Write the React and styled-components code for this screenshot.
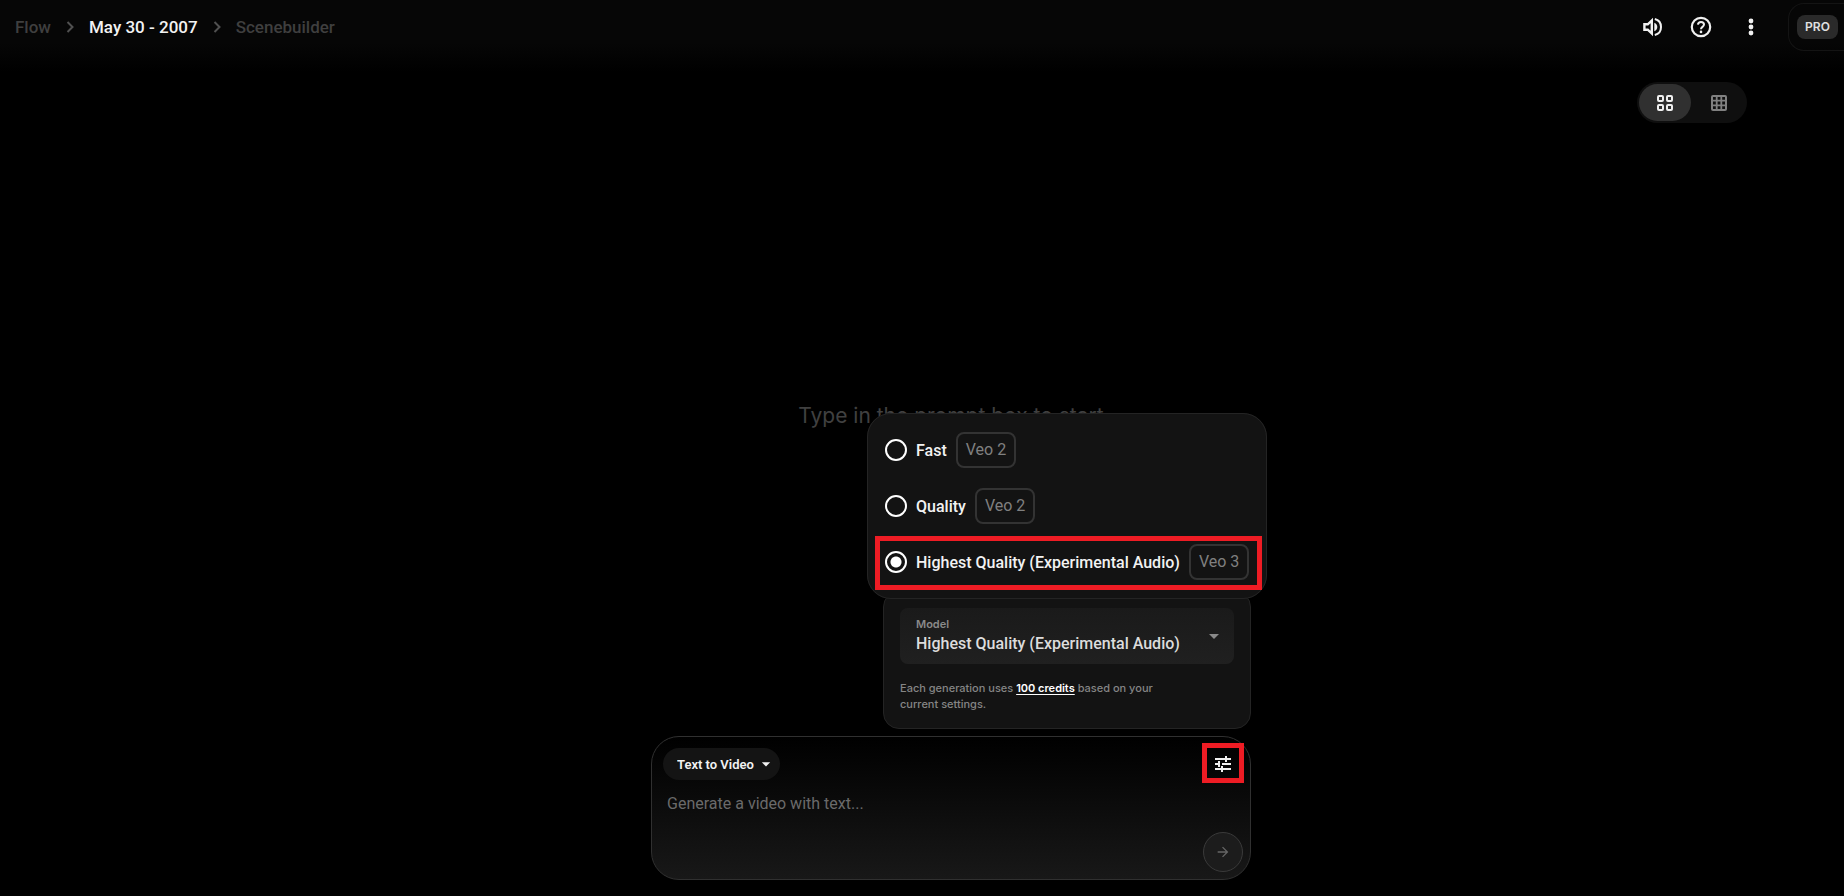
import React from "react";
import styled, { createGlobalStyle, css } from "styled-components";
import { MdArrowForward, MdArrowDropDown } from "react-icons/md";

const GlobalStyle = createGlobalStyle`
  *, *::before, *::after { box-sizing: border-box; }
  body {
    margin: 0;
    background: #000;
    color: #f0f0f0;
    font-family: Roboto, "Liberation Sans", sans-serif;
    font-size: 16px;
  }
  button, select, input, textarea { font: inherit; color: inherit; }
`;

const displayFont = css`
  font-family: Inter, Roboto, sans-serif;
`;

const Page = styled.div`
  min-height: 100vh;
  display: flex;
  flex-direction: column;
  overflow-x: hidden;
`;

const Header = styled.header`
  height: 72px;
  padding: 3px 0 0 15px;
  display: flex;
  justify-content: space-between;
  align-items: flex-start;
  background: linear-gradient(#060606 60%, #000);
`;

const Breadcrumbs = styled.nav`
  height: 47px;
  display: flex;
  align-items: center;
  gap: 15px;
`;

const Crumb = styled.a`
  color: ${(p) => (p.$current ? "#f2f2f2" : "#3f3f3f")};
  font-size: 17px;
  font-weight: 500;
  line-height: 24px;
  text-decoration: none;
`;

const Chevron = styled.svg`
  width: 8px;
  height: 12px;
  fill: none;
  stroke: #505050;
  stroke-width: 2;
`;

const HeaderActions = styled.div`
  display: flex;
  align-items: center;
`;

const IconButton = styled.button`
  width: 48px;
  height: 48px;
  padding: 0;
  border: 0;
  background: none;
  display: grid;
  place-items: center;
  color: #f0f0f0;
`;

const MoreButton = styled(IconButton)`
  margin-left: 2px;
`;

const Glyph = styled.svg`
  width: ${(p) => p.$size}px;
  height: ${(p) => p.$size}px;
  fill: none;
  stroke: currentColor;
  stroke-width: 2;
`;

const AccountButton = styled.button`
  height: 48px;
  margin-left: 13px;
  padding: 0 6px 0 8px;
  border: 1px solid #141414;
  border-right: 0;
  border-radius: 16px 0 0 16px;
  background: none;
`;

const PlanBadge = styled.span`
  ${displayFont}
  display: block;
  width: 41px;
  border-radius: 8px;
  background: #2a2a2a;
  color: #e0e0e0;
  font-size: 12px;
  font-weight: 600;
  line-height: 24px;
  text-align: center;
`;

const Main = styled.main`
  flex: 1;
  display: flex;
  flex-direction: column;
`;

const ViewToolbar = styled.div`
  display: flex;
  justify-content: flex-end;
  padding: 10px 97px 0 0;
`;

const ViewToggle = styled.div`
  display: flex;
  gap: 2px;
  padding: 2px;
  border-radius: 21px;
  background: #0f0f0f;
`;

const ViewButton = styled.button`
  width: 52px;
  height: 37px;
  padding: 0;
  border: 0;
  border-radius: 19px;
  display: grid;
  place-items: center;
  background: ${(p) => (p.$active ? "#303030" : "none")};
  color: ${(p) => (p.$active ? "#f0f0f0" : "#808080")};
`;

const Stage = styled.section`
  flex: 1;
  padding: 0 0 27px 58px;
  display: grid;
  place-items: center;
`;

const Hint = styled.p`
  ${displayFont}
  margin: 0;
  color: #404040;
  font-size: 21px;
  line-height: 28px;
`;

const Dock = styled.footer`
  padding: 0 0 16px 58px;
  display: flex;
  justify-content: center;
`;

const Composer = styled.form`
  position: relative;
  width: 600px;
  max-width: 100%;
  padding: 11px 7px 7px 11px;
  border: 1px solid #303030;
  border-radius: 28px;
  background: linear-gradient(#000, #181818);
`;

const ComposerRow = styled.div`
  display: flex;
  justify-content: space-between;
  align-items: center;
  height: 32px;
`;

const ModeField = styled.label`
  position: relative;
  display: flex;
  align-items: center;
`;

const ModeSelect = styled.select`
  appearance: none;
  width: 117px;
  height: 32px;
  padding: 0 24px 0 14px;
  border: 0;
  border-radius: 16px;
  background: #141414;
  color: #f2f2f2;
  font-size: 13px;
  font-weight: 600;
`;

const Arrow = styled(MdArrowDropDown)`
  position: absolute;
  top: 50%;
  right: ${(p) => p.$right}px;
  width: ${(p) => p.$size}px;
  height: ${(p) => p.$size}px;
  transform: translateY(-50%);
  color: ${(p) => p.color};
  pointer-events: none;
`;

const Highlight = styled.span`
  position: absolute;
  inset: ${(p) => p.$inset};
  border: 5px solid #ee1c24;
  pointer-events: none;
`;

const TuneButton = styled(IconButton)`
  position: relative;
  width: 40px;
  height: 40px;
`;

const PromptRow = styled.div`
  display: flex;
  align-items: flex-end;
  gap: 12px;
`;

const PromptInput = styled.textarea`
  flex: 1;
  height: 92px;
  padding: 12px 4px;
  border: 0;
  outline: 0;
  resize: none;
  background: none;
  line-height: 24px;
  &::placeholder { color: #6a6a6a; opacity: 1; }
`;

const SendButton = styled.button`
  width: 40px;
  height: 40px;
  padding: 0;
  border: 1px solid #3a3a3a;
  border-radius: 50%;
  background: #1c1c1c;
  color: #666;
  display: grid;
  place-items: center;
`;

const surface = css`
  border: 1px solid #242424;
  background: #131313;
`;

const Settings = styled.section`
  ${surface}
  position: absolute;
  right: -1px;
  bottom: calc(100% + 8px);
  width: 368px;
  padding: 16px;
  border-radius: 16px;
`;

const ModelField = styled.label`
  position: relative;
  display: block;
  height: 56px;
  padding: 8px 0 0;
  border-radius: 8px;
  background: linear-gradient(#1a1a1a, #202020);
`;

const ModelLabel = styled.span`
  ${displayFont}
  display: block;
  padding: 0 16px;
  color: #8a8a8a;
  font-size: 11px;
  font-weight: 600;
  line-height: 16px;
`;

const ModelSelect = styled.select`
  appearance: none;
  display: block;
  width: 100%;
  height: 22px;
  padding: 0 32px 0 16px;
  border: 0;
  background: none;
  color: #dcdcdc;
  font-weight: 500;
`;

const CreditNote = styled.p`
  ${displayFont}
  max-width: 268px;
  margin: 16px 0 0;
  color: #858585;
  font-size: 11px;
  font-weight: 500;
  line-height: 16px;
`;

const CreditLink = styled.a`
  color: #fff;
  font-weight: 600;
  text-underline-offset: 2px;
`;

const ModelMenu = styled.fieldset`
  ${surface}
  position: absolute;
  right: -17px;
  bottom: 129px;
  width: 400px;
  min-width: 0;
  margin: 0;
  padding: 8px;
  border-radius: 24px;
`;

const Option = styled.label`
  position: relative;
  height: 56px;
  padding: 0 9px;
  display: flex;
  align-items: center;
  gap: 9px;
`;

const Radio = styled.input`
  appearance: none;
  flex: none;
  width: 22px;
  height: 22px;
  margin: 0;
  border: 2px solid #fff;
  border-radius: 50%;
  &:checked { background: radial-gradient(circle, #fff 5px, transparent 6px); }
`;

const VersionBadge = styled.span`
  padding: 0 8px;
  border: 2px solid #333;
  border-radius: 8px;
  color: #808080;
  line-height: 32px;
  white-space: nowrap;
`;

const OptionName = styled.span`
  color: #f2f2f2;
  font-weight: 500;
  white-space: nowrap;
`;

const MODELS = [
  { id: "fast", name: "Fast", version: "Veo 2" },
  { id: "quality", name: "Quality", version: "Veo 2" },
  { id: "highest", name: "Highest Quality (Experimental Audio)", version: "Veo 3", highlighted: true },
];

const Separator = () => (
  <Chevron viewBox="0 0 8 12" aria-hidden="true">
    <path d="M1.5 1l5 5-5 5" />
  </Chevron>
);

const VolumeIcon = () => (
  <Glyph $size={22} viewBox="0 0 22 22" aria-hidden="true">
    <path d="M2.4 8.3h3.4l4-3.8v13l-4-3.8H2.4z" strokeWidth="2.4" />
    <path d="M12.3 6.8v8.4c2-.8 3-2.4 3-4.2s-1-3.4-3-4.2z" fill="currentColor" stroke="none" />
    <path d="M12.8 3c3.8.9 6.2 4.2 6.2 8s-2.4 7.1-6.2 8" />
  </Glyph>
);

const HelpIcon = () => (
  <Glyph $size={24} viewBox="0 0 24 24" aria-hidden="true">
    <circle cx="12" cy="12" r="9.2" strokeWidth="2.2" />
    <path d="M8.9 9.7c.2-1.7 1.4-2.7 3.1-2.7s3 1.1 3 2.6c0 2.3-3 2.3-3 4.6" />
    <circle cx="12" cy="16.9" r="1.3" fill="currentColor" stroke="none" />
  </Glyph>
);

const MoreIcon = () => (
  <Glyph $size={24} viewBox="0 0 24 24" aria-hidden="true">
    {[6, 12, 18].map((y) => (
      <circle key={y} cx="12" cy={y} r="2.4" fill="currentColor" stroke="none" />
    ))}
  </Glyph>
);

const LargeGridIcon = () => (
  <Glyph $size={16} viewBox="0 0 16 16" aria-hidden="true">
    {[[1, 1], [10, 1], [1, 10], [10, 10]].map(([x, y]) => (
      <rect key={`${x}-${y}`} x={x} y={y} width="5" height="5" rx="1" />
    ))}
  </Glyph>
);

const SmallGridIcon = () => (
  <Glyph $size={16} viewBox="0 0 16 16" aria-hidden="true">
    <rect x="1" y="1" width="14" height="14" rx="1" />
    <path d="M5.7 1v14M10.3 1v14M1 5.7h14M1 10.3h14" strokeWidth="1.8" />
  </Glyph>
);

const TuneIcon = () => (
  <Glyph $size={18} viewBox="0 0 18 18" aria-hidden="true">
    <path d="M1 4h10M13 4h4M1 9h4M8 9h9M1 14h6M9 14h8M12 1v6M5 6v6M8 11v6" />
  </Glyph>
);

export default function App() {
  const [model, setModel] = React.useState("highest");
  return (
    <Page>
      <GlobalStyle />
      <Header>
        <Breadcrumbs aria-label="Breadcrumb">
          <Crumb href="#flow">Flow</Crumb>
          <Separator />
          <Crumb href="#project" $current>May 30 - 2007</Crumb>
          <Separator />
          <Crumb href="#scenebuilder">Scenebuilder</Crumb>
        </Breadcrumbs>
        <HeaderActions>
          <IconButton aria-label="Sound"><VolumeIcon /></IconButton>
          <IconButton aria-label="Help"><HelpIcon /></IconButton>
          <MoreButton aria-label="More"><MoreIcon /></MoreButton>
          <AccountButton aria-label="Account"><PlanBadge>PRO</PlanBadge></AccountButton>
        </HeaderActions>
      </Header>
      <Main>
        <ViewToolbar>
          <ViewToggle>
            <ViewButton $active aria-label="Large grid"><LargeGridIcon /></ViewButton>
            <ViewButton aria-label="Small grid"><SmallGridIcon /></ViewButton>
          </ViewToggle>
        </ViewToolbar>
        <Stage><Hint>Type in the prompt box to start</Hint></Stage>
      </Main>
      <Dock>
        <Composer onSubmit={(e) => e.preventDefault()}>
          <ComposerRow>
            <ModeField>
              <ModeSelect aria-label="Mode">
                <option>Text to Video</option>
              </ModeSelect>
              <Arrow $right={4} $size={20} color="#f2f2f2" />
            </ModeField>
            <TuneButton type="button" aria-label="Settings">
              <TuneIcon />
              <Highlight $inset="-1px -1px 1px" />
            </TuneButton>
          </ComposerRow>
          <PromptRow>
            <PromptInput aria-label="Prompt" placeholder="Generate a video with text..." />
            <SendButton aria-label="Send"><MdArrowForward size={16} /></SendButton>
          </PromptRow>
          <Settings aria-label="Generation settings">
            <ModelField>
              <ModelLabel>Model</ModelLabel>
              <ModelSelect value={model} onChange={(e) => setModel(e.target.value)}>
                {MODELS.map((m) => <option key={m.id} value={m.id}>{m.name}</option>)}
              </ModelSelect>
              <Arrow $right={8} $size={24} color="#8a8a8a" />
            </ModelField>
            <CreditNote>
              Each generation uses <CreditLink href="#credits">100 credits</CreditLink> based on your current settings.
            </CreditNote>
            <ModelMenu aria-label="Model">
              {MODELS.map((m) => (
                <Option key={m.id}>
                  <Radio type="radio" name="model" checked={model === m.id} onChange={() => setModel(m.id)} />
                  <OptionName>{m.name}</OptionName>
                  <VersionBadge>{m.version}</VersionBadge>
                  {m.highlighted && <Highlight $inset="2px -4px 0 -1px" />}
                </Option>
              ))}
            </ModelMenu>
          </Settings>
        </Composer>
      </Dock>
    </Page>
  );
}
